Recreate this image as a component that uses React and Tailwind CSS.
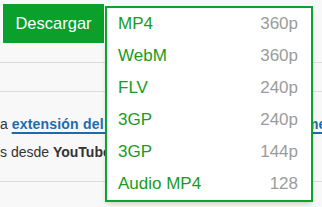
const formats = [
  { name: 'MP4', quality: '360p' },
  { name: 'WebM', quality: '360p' },
  { name: 'FLV', quality: '240p' },
  { name: '3GP', quality: '240p' },
  { name: '3GP', quality: '144p' },
  { name: 'Audio MP4', quality: '128' },
];

const App = () => {
  return (
    <div
      className="relative w-[322px] h-[207px] overflow-hidden bg-[#f8f8f8] text-[#333]"
      style={{ fontFamily: '"Liberation Sans", Arial, sans-serif' }}
    >
      <div className="h-[63px] border-b border-[#dcdcdc] pl-[3px] pt-[4px]">
        <button className="w-[101px] h-[39px] bg-[#0b9f2c] text-white text-[16.5px] leading-none">
          Descargar
        </button>
      </div>
      <div className="h-[29px] border-b border-[#dcdcdc]" />
      <div className="h-[90px] border-b border-[#dcdcdc] pt-[18px] text-[14px] whitespace-nowrap">
        <p className="leading-[28px]">
          a{' '}
          <a className="font-bold tracking-[0.2px] text-[#1b6bb0] underline decoration-2 underline-offset-[3px]">
            extensión del navegador para Google Chrome
          </a>
        </p>
        <p className="leading-[28px]">
          s desde <span className="font-bold">YouTube</span> y otros sitios
        </p>
      </div>

      <div className="absolute left-[105px] top-[6px] w-[208px] border-2 border-[#0ca22c] bg-white shadow-md">
        {formats.map((f, i) => (
          <div
            key={i}
            className="flex items-center justify-between h-[32px] pl-[11px] pr-[13px] text-[17px]"
          >
            <span className="text-[#179c21]">{f.name}</span>
            <span className="text-[#9b9b9b]">{f.quality}</span>
          </div>
        ))}
      </div>
    </div>
  );
};

export default App;
